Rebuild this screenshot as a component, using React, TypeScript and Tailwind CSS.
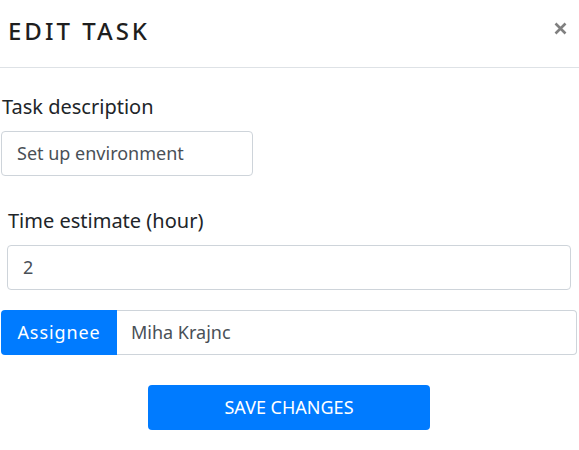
export default function App() {
  const font = { fontFamily: '"Noto Sans", "Open Sans", sans-serif' };
  return (
    <div className="w-[579px] h-[450px] bg-white" style={font}>
      <div className="flex items-center justify-between h-[68px] border-b border-[#dee2e6] pl-[8px] pr-[12px]">
        <h1 className="text-[24px] tracking-[0.125em] text-[#1e1e1e] font-medium leading-none -mt-[6px]">EDIT TASK</h1>
        <svg width="13" height="13" viewBox="0 0 13 13" className="-mt-[11px]">
          <path d="M1.5 1.5 L11.5 11.5 M11.5 1.5 L1.5 11.5" stroke="#808080" strokeWidth="2.6" strokeLinecap="butt" />
        </svg>
      </div>
      <div className="flex flex-col">
        <label className="ml-[2px] mt-[24px] text-[20px] text-[#212529] leading-[30px]">Task description</label>
        <div className="ml-[1px] mt-[9px] w-[252px] h-[45px] border border-[#ced4da] rounded-[4px] flex items-center pl-[15px] text-[18px] text-[#495057]">Set up environment</div>
        <label className="ml-[8px] mt-[30px] text-[20px] text-[#212529] leading-[30px]">Time estimate (hour)</label>
        <div className="ml-[7px] mt-[9px] w-[564px] h-[45px] border border-[#ced4da] rounded-[4px] flex items-center pl-[15px] text-[18px] text-[#495057]">2</div>
        <div className="ml-[1px] mt-[20px] w-[576px] h-[45px] flex">
          <div className="w-[116px] bg-[#007bff] rounded-l-[4px] text-white flex items-center justify-center text-[18px] tracking-[0.05em]">Assignee</div>
          <div className="flex-1 flex items-center pl-[14px] text-[18px] text-[#495057] border border-l-0 border-[#ced4da] rounded-r-[4px]">Miha Krajnc</div>
        </div>
        <div className="flex justify-center mt-[30px]">
          <button className="-ml-[1px] w-[282px] h-[45px] bg-[#007bff] text-white rounded-[4px] text-[18px] flex items-center justify-center">SAVE CHANGES</button>
        </div>
      </div>
    </div>
  );
}
